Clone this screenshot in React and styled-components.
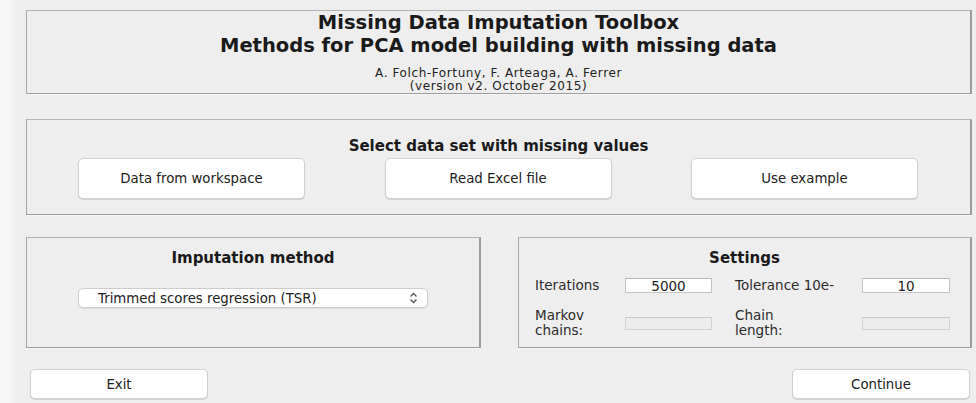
import styled, { createGlobalStyle } from 'styled-components';

const GlobalStyle = createGlobalStyle`
  html, body {
    margin: 0;
    padding: 0;
  }

  body {
    background: linear-gradient(to right, #f6f6f6 0, #f6f6f6 10px, #eeeeee 17px);
    font-family: "DejaVu Sans", Verdana, sans-serif;
    color: #1e1e1e;
  }
`;

const Window = styled.div`
  display: flex;
  flex-direction: column;
  width: 976px;
  height: 403px;
  box-sizing: border-box;
  padding: 10px 4px 0 26px;
`;

const Panel = styled.section`
  box-sizing: border-box;
  height: ${(p) => p.$height}px;
  margin-top: ${(p) => p.$gap || 0}px;
  border-top: 1px solid #b4b4b4;
  border-left: 1px solid #a6a6a6;
  border-right: 2px solid #9d9d9d;
  border-bottom: 1px solid #9f9f9f;
  box-shadow: 0 1px 0 #f7f7f7;
  background: #eeeeee;
  display: flex;
  flex-direction: column;
  align-items: center;
`;

const Title = styled.h1`
  margin: 0;
  font-size: 19.5px;
  line-height: 23px;
  font-weight: bold;
  text-align: center;
  color: #1a1a1a;
`;

const Credits = styled.p`
  margin: 10px 0 0;
  font-size: 12px;
  line-height: 13px;
  letter-spacing: 0.6px;
  text-align: center;
  color: #222;
`;

const Heading = styled.h2`
  margin: 0;
  padding-top: ${(p) => p.$top}px;
  font-size: 15px;
  line-height: 18px;
  font-weight: bold;
  color: #1a1a1a;
`;

const ChoiceRow = styled.div`
  align-self: stretch;
  display: flex;
  justify-content: space-between;
  margin-top: 3px;
  padding: 0 52px 0 51px;
`;

const Button = styled.button`
  box-sizing: border-box;
  width: ${(p) => p.$width}px;
  height: ${(p) => p.$height}px;
  background: #ffffff;
  border: 1px solid #d0d0d0;
  border-radius: 5px;
  box-shadow: 0 1px 1px rgba(0, 0, 0, 0.12);
  font-family: "DejaVu Sans", Verdana, sans-serif;
  font-size: 13.3px;
  color: #222;
  padding: 0;
`;

const LowerRow = styled.div`
  display: flex;
  gap: 37px;
  margin-top: 22px;
`;

const HalfPanel = styled(Panel)`
  flex: 0 0 ${(p) => p.$width}px;
`;

const Select = styled.div`
  box-sizing: border-box;
  width: 350px;
  height: 20px;
  margin-top: 21px;
  display: flex;
  align-items: center;
  justify-content: space-between;
  padding: 0 9px 0 19px;
  background: #ffffff;
  border: 1px solid #cdcdcd;
  border-radius: 5px;
  box-shadow: 0 1px 1px rgba(0, 0, 0, 0.08);
  font-size: 13.3px;
  color: #222;
`;

const SettingsGrid = styled.div`
  align-self: stretch;
  display: grid;
  grid-template-columns: 90px 87px 150px 88px;
  grid-template-rows: 15px 30px;
  row-gap: 15px;
  align-items: center;
  margin-top: 11px;
  padding-left: 16px;
`;

const Label = styled.span`
  padding-left: ${(p) => (p.$indent ? 23 : 0)}px;
  font-size: 13.5px;
  line-height: 15px;
  color: #2c2c2c;
`;

const Field = styled.div`
  box-sizing: border-box;
  height: ${(p) => (p.$disabled ? 13 : 15)}px;
  display: flex;
  align-items: center;
  justify-content: center;
  background: ${(p) => (p.$disabled ? '#ececec' : '#ffffff')};
  border: 1px solid ${(p) => (p.$disabled ? '#d2d2d2' : '#c4c4c4')};
  border-top-color: ${(p) => (p.$disabled ? '#c8c8c8' : '#b6b6b6')};
  font-size: 13.5px;
  color: #222;
`;

const Footer = styled.div`
  display: flex;
  justify-content: space-between;
  margin-top: 21px;
  padding: 0 2px 0 4px;
`;

function UpDownArrows() {
  return (
    <svg width="9" height="12" viewBox="0 0 9 12" fill="none" stroke="#555" strokeWidth="1.3">
      <path d="M1.5 4.5 L4.5 1.5 L7.5 4.5" />
      <path d="M1.5 7.5 L4.5 10.5 L7.5 7.5" />
    </svg>
  );
}

export default function App() {
  return (
    <>
      <GlobalStyle />
      <Window>
        <Panel $height={84}>
          <Title>
            Missing Data Imputation Toolbox
            <br />
            Methods for PCA model building with missing data
          </Title>
          <Credits>
            A. Folch-Fortuny, F. Arteaga, A. Ferrer
            <br />
            (version v2. October 2015)
          </Credits>
        </Panel>

        <Panel $height={96} $gap={25}>
          <Heading $top={17}>Select data set with missing values</Heading>
          <ChoiceRow>
            <Button type="button" $width={227} $height={41}>Data from workspace</Button>
            <Button type="button" $width={227} $height={41}>Read Excel file</Button>
            <Button type="button" $width={227} $height={41}>Use example</Button>
          </ChoiceRow>
        </Panel>

        <LowerRow>
          <HalfPanel $height={111} $width={455}>
            <Heading $top={11}>Imputation method</Heading>
            <Select>
              <span>Trimmed scores regression (TSR)</span>
              <UpDownArrows />
            </Select>
          </HalfPanel>

          <HalfPanel $height={111} $width={454}>
            <Heading $top={11}>Settings</Heading>
            <SettingsGrid>
              <Label>Iterations</Label>
              <Field>5000</Field>
              <Label $indent>Tolerance 10e-</Label>
              <Field>10</Field>
              <Label>
                Markov
                <br />
                chains:
              </Label>
              <Field $disabled />
              <Label $indent>
                Chain
                <br />
                length:
              </Label>
              <Field $disabled />
            </SettingsGrid>
          </HalfPanel>
        </LowerRow>

        <Footer>
          <Button type="button" $width={178} $height={30}>Exit</Button>
          <Button type="button" $width={178} $height={30}>Continue</Button>
        </Footer>
      </Window>
    </>
  );
}
